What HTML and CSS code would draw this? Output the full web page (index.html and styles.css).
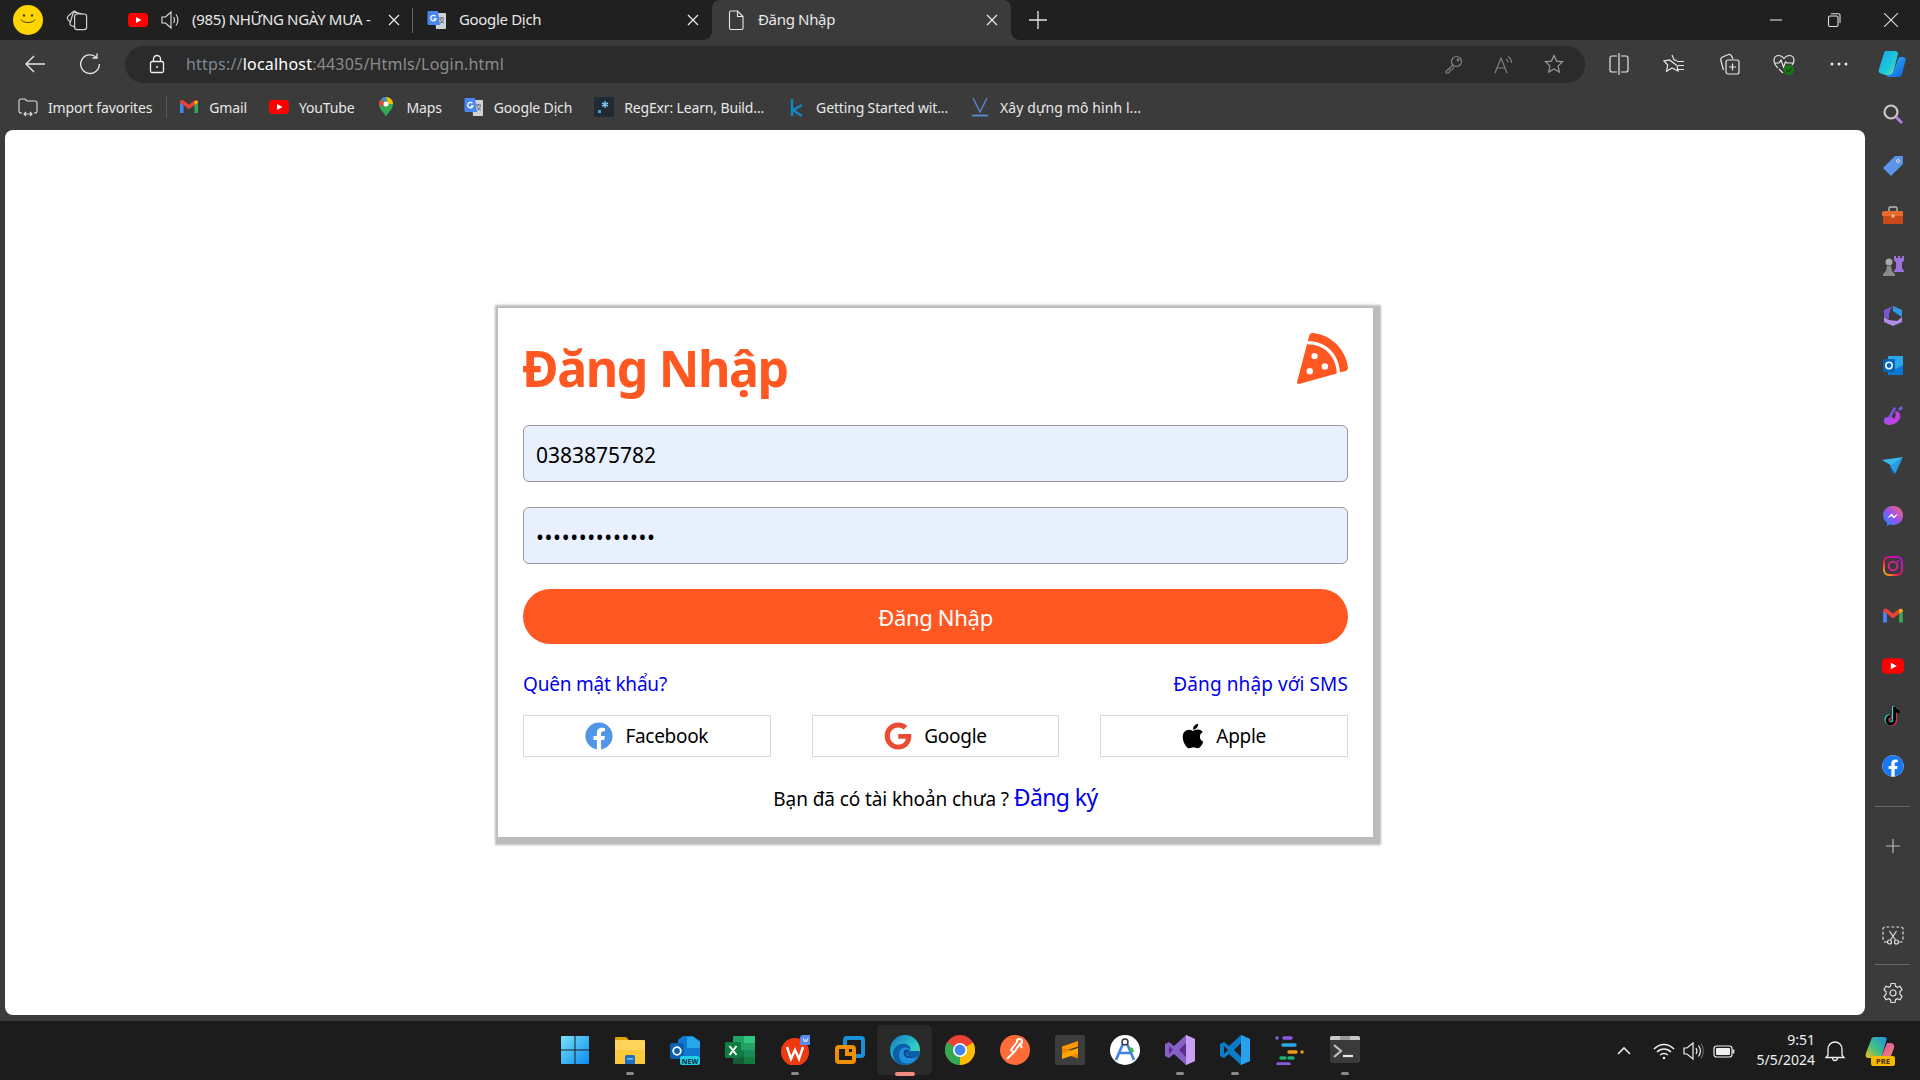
FILE: index.html
```html
<!DOCTYPE html>
<html lang="vi">
<head>
<meta charset="utf-8">
<title>Đăng Nhập</title>
<link rel="stylesheet" href="styles.css">
</head>
<body>
<svg class="defs" width="0" height="0" aria-hidden="true">
  <symbol id="yt" viewBox="0 0 20 20"><rect x="0" y="3" width="20" height="14" rx="4" fill="#f00"/><path d="M8 7l5.5 3L8 13z" fill="#fff"/></symbol>
  <symbol id="tr" viewBox="0 0 20 20"><path d="M8 3h10a1 1 0 0 1 1 1v14a1 1 0 0 1-1 1H9z" fill="#cfd3d8"/><path d="M12 8h5M14.5 7v1.5M13 9c.6 2 2 3.4 4 4M16.5 9c-.5 2-1.800 3.500-3.800 4.500" stroke="#5f6368" stroke-width="1" fill="none"/><path d="M1.500 1h9.500l2 14H1.500A1 1 0 0 1 .5 14V2a1 1 0 0 1 1-1z" fill="#4a86f0"/><path d="M8.500 6.300A2.700 2.700 0 1 0 9 9H6.700" fill="none" stroke="#fff" stroke-width="1.300"/></symbol>
  <symbol id="gm" viewBox="0 0 20 20"><path d="M1 5v11h3.500V8z" fill="#4285f4"/><path d="M19 5v11h-3.500V8z" fill="#34a853"/><path d="M1 5.500C1 3 3.500 2.500 5 3.800L10 7.800l5-4c1.500-1.300 4-.8 4 1.700L15.500 8 10 12.200 4.500 8z" fill="#ea4335"/><path d="M15.500 8V4.500c1.500-1.500 3.500-1 3.500 1z" fill="#fbbc04"/></symbol>
  <symbol id="fb" viewBox="0 0 512 512"><circle cx="256" cy="256" r="248" fill="#fff"/><path fill="#1877f2" d="M504 256C504 119 393 8 256 8S8 119 8 256c0 123.780 90.690 226.380 209.250 245V327.690h-63V256h63v-54.640c0-62.150 37-96.480 93.670-96.480 27.140 0 55.520 4.840 55.520 4.840v61h-31.280c-30.800 0-40.410 19.120-40.410 38.730V256h68.780l-11 71.690h-57.780V501C413.310 482.380 504 379.780 504 256z"/></symbol>
</svg>

<div class="titlebar">
  <div class="avatar-slot">
    <svg class="avatar" viewBox="0 0 30 30"><circle cx="15" cy="15" r="15" fill="#ffd500"/><circle cx="11" cy="10.500" r="1.200" fill="#4a3d00"/><circle cx="19" cy="10.500" r="1.200" fill="#4a3d00"/><path d="M8 14.500c2 4 12 4 14 0" fill="none" stroke="#4a3d00" stroke-width="1"/></svg>
  </div>
  <div class="tabs-btn">
    <svg class="ic24" viewBox="0 0 20 20" fill="none" stroke="#d0d0d0" stroke-width="1"><rect x="8" y="5" width="10" height="13" rx="2"/><path d="M7.500 15.500L5.500 14.800a2 2 0 0 1-1.200-2.500L6.500 5a2 2 0 0 1 2.500-1.300L14.500 5"/><path d="M4 11.500L2.400 9.500a2 2 0 0 1 .4-2.800L6.500 3.200a2 2 0 0 1 2.800.2L10.500 4.800"/></svg>
  </div>
  <div class="tab">
    <svg class="ic20"><use href="#yt"/></svg>
    <svg class="ic20 speaker" viewBox="0 0 20 20" fill="none" stroke="#e0e0e0" stroke-width="1.100"><path d="M2 7h3.500L11 2v16l-5.500-5H2z"/><path d="M13.500 7c1.300 1.500 1.300 4.500 0 6M16 4.500c2.500 3 2.500 8 0 11"/></svg>
    <span class="tab-title">(985) NHỮNG NGÀY MƯA -</span>
    <svg class="close" viewBox="0 0 12 12" stroke="#e8e8e8" stroke-width="1.300"><path d="M1 1l10 10M11 1L1 11"/></svg>
  </div>
  <div class="tab tab-sep">
    <svg class="ic20"><use href="#tr"/></svg>
    <span class="tab-title">Google Dịch</span>
    <svg class="close" viewBox="0 0 12 12" stroke="#e8e8e8" stroke-width="1.300"><path d="M1 1l10 10M11 1L1 11"/></svg>
  </div>
  <div class="tab tab-active">
    <svg class="ic20" viewBox="0 0 20 20" fill="none" stroke="#e8e8e8" stroke-width="1.100"><path d="M3.500 2.500A1.500 1.500 0 0 1 5 1h6.500L17 6.500V18a1.500 1.500 0 0 1-1.500 1.500H5A1.500 1.500 0 0 1 3.500 18zM11.500 1v5.500H17"/></svg>
    <span class="tab-title">Đăng Nhập</span>
    <svg class="close" viewBox="0 0 12 12" stroke="#e8e8e8" stroke-width="1.300"><path d="M1 1l10 10M11 1L1 11"/></svg>
  </div>
  <svg class="newtab" viewBox="0 0 18 18" stroke="#e8e8e8" stroke-width="1.300"><path d="M9 0v18M0 9h18"/></svg>
  <div class="winctl">
    <div class="winbtn"><svg class="ic14" viewBox="0 0 14 14" stroke="#e0e0e0" stroke-width="1.100"><path d="M1 7h12"/></svg></div>
    <div class="winbtn"><svg class="ic14" viewBox="0 0 14 14" stroke="#e0e0e0" stroke-width="1.100" fill="none"><rect x="1.500" y="3" width="9.500" height="10.500" rx="1.500"/><path d="M4 .8h7.500A1.500 1.500 0 0 1 13 2.300V10"/></svg></div>
    <div class="winbtn"><svg class="ic14" viewBox="0 0 14 14" stroke="#e0e0e0" stroke-width="1.100"><path d="M0 0l14 14M14 0L0 14"/></svg></div>
  </div>
</div>

<div class="toolbar">
  <div class="navbtn"><svg class="ic22" viewBox="0 0 22 22" fill="none" stroke="#e8e8e8" stroke-width="1.400"><path d="M21 11H2M10 3l-8 8 8 8"/></svg></div>
  <div class="navbtn nav2"><svg class="ic22" viewBox="0 0 22 22" fill="none" stroke="#e8e8e8" stroke-width="1.300"><path d="M17.500 4.500A9.300 9.300 0 1 0 20.300 11"/><path d="M18 .5v4.500h-4.500"/></svg></div>
  <div class="addr">
    <svg class="ic20" viewBox="0 0 20 20" fill="none" stroke="#eee" stroke-width="1.300"><rect x="3.500" y="7.500" width="13" height="11" rx="1.500"/><path d="M6.500 7.500V5a3.500 3.500 0 0 1 7 0v2.500"/><circle cx="10" cy="13" r="1" fill="#eee" stroke="none"/></svg>
    <div class="url"><span class="u-dim">https://</span><span class="u-host">localhost</span><span class="u-gray">:44305/Htmls/Login.html</span></div>
    <div class="addr-tools">
      <svg class="ic20" viewBox="0 0 20 20" fill="none" stroke="#808080" stroke-width="1.200"><circle cx="12.500" cy="7.500" r="5"/><circle cx="14" cy="6" r=".8"/><path d="M9 11l-7 6.500V19h2.500l1-1 .5-2h2l2-3"/></svg>
      <svg class="ic20" viewBox="0 0 20 20" fill="none" stroke="#808080" stroke-width="1.200"><path d="M1 19L7 4l6 15M3 14h8"/><path d="M12 5c1.500 1 2 2.500 2 3.500M14 2.500c2.500 1.500 3.500 4 3.500 6.500"/></svg>
      <svg class="ic20" viewBox="0 0 20 20" fill="none" stroke="#9a9a9a" stroke-width="1.200"><path d="M10 1.500l2.600 5.600 6 .7-4.500 4.100 1.200 6.100L10 15l-5.300 3 1.200-6.100L1.400 7.800l6-.7z"/></svg>
    </div>
  </div>
  <div class="tools">
    <svg class="ic22" viewBox="0 0 22 22" fill="none" stroke="#e8e8e8" stroke-width="1.200"><path d="M9 3H4a2 2 0 0 0-2 2v12a2 2 0 0 0 2 2h5M13 3h5a2 2 0 0 1 2 2v12a2 2 0 0 1-2 2h-5M11 0v22"/></svg>
    <svg class="ic22" viewBox="0 0 22 22" fill="none" stroke="#e8e8e8" stroke-width="1.200"><path d="M9 2l2.200 5 2.800.3M14 12.500l1 5.500-6-3-5.500 3.200L4.700 12 1 8l5.500-1z"/><path d="M14 8.500h7M15 12.500h6M14 16.500h7"/></svg>
    <svg class="ic22" viewBox="0 0 22 22" fill="none" stroke="#e8e8e8" stroke-width="1.200"><rect x="8" y="7" width="13" height="14" rx="2"/><path d="M14.500 10.500v7M11 14h7"/><path d="M5.500 17L3 8a3 3 0 0 1 1.500-4L10 1.700a3 3 0 0 1 3.500 1.200L15 6"/></svg>
    <svg class="ic22" viewBox="0 0 22 22" fill="none" stroke="#e8e8e8" stroke-width="1.200"><path d="M5 15C2 12 1 10 1 7.500 1 4.500 3 2.500 6 2.500c2 0 3.500 1 5 3 1.500-2 3-3 5-3 3 0 5 2 5 5 0 1.500-.5 3-2 4.500M1 10h5l2-3 2.500 7 2-5 1.500 1h6M6 16l4 4"/><circle cx="16" cy="17" r="5" fill="#107c10" stroke="none"/><path d="M13.500 17l2 2 3-3.500" stroke="#2a2a2a" stroke-width="1.100"/></svg>
    <svg class="ic22" viewBox="0 0 22 22" fill="#e8e8e8"><circle cx="4" cy="11" r="1.500"/><circle cx="11" cy="11" r="1.500"/><circle cx="18" cy="11" r="1.500"/></svg>
    <svg class="ic30" viewBox="0 0 30 30"><defs><linearGradient id="cpa" x1="0" y1="0" x2="1" y2="1"><stop offset="0" stop-color="#16a6e8"/><stop offset=".6" stop-color="#1ec8d8"/><stop offset="1" stop-color="#a2e2a2"/></linearGradient><linearGradient id="cpb" x1="0" y1="0" x2="1" y2="1"><stop offset="0" stop-color="#2bb5f5"/><stop offset="1" stop-color="#0f62e0"/></linearGradient></defs><path d="M9 2h9c2 0 3 1 3 3l-5 19c-.5 2-2 3-4 3l-7-2c-3-1-4-2-3-5L7 4c.3-1.300 1-2 2-2z" fill="url(#cpa)"/><path d="M22 8h4c2 0 3 1.500 2.500 3.500L25 25c-.5 2-2 3-4 3H11c-1 0-1-1-.5-2 2.500.2 5-1 5.500-3z" fill="url(#cpb)"/></svg>
  </div>
</div>

<div class="body-row">
  <div class="left-col">
    <div class="bookmarks">
      <div class="bm">
        <svg class="ic20" viewBox="0 0 20 20" fill="none" stroke="#e0e0e0" stroke-width="1.100"><path d="M4 16H3a2 2 0 0 1-2-2V4a2 2 0 0 1 2-2h4l2 2h8a2 2 0 0 1 2 2v8a2 2 0 0 1-2 2h-1M6 17h8M8 15l-2 2 2 2M12 15l2 2-2 2"/></svg>
        <span>Import favorites</span>
      </div>
      <div class="bm-sep"></div>
      <div class="bm"><svg class="ic20"><use href="#gm"/></svg><span>Gmail</span></div>
      <div class="bm"><svg class="ic20"><use href="#yt"/></svg><span>YouTube</span></div>
      <div class="bm">
        <svg class="ic20" viewBox="0 0 20 20"><path d="M10 20c-1-4-7-7-7-13a7 7 0 0 1 14 0c0 6-6 9-7 13z" fill="#34a853"/><path d="M5 2.500A7 7 0 0 1 10 0v4.500z" fill="#4285f4"/><path d="M3 7a7 7 0 0 1 2-4.500l3 3L6 10z" fill="#ea4335"/><path d="M10 0a7 7 0 0 1 7 7h-4.500z" fill="#fbbc04"/><circle cx="10" cy="7" r="2.500" fill="#fff"/></svg>
        <span>Maps</span>
      </div>
      <div class="bm"><svg class="ic20"><use href="#tr"/></svg><span>Google Dịch</span></div>
      <div class="bm">
        <svg class="ic20" viewBox="0 0 20 20"><rect width="20" height="20" fill="#1f2a33"/><path d="M11 4v7M8 6l6 3M14 6L8 9" stroke="#7fc4f5" stroke-width="1.400"/><rect x="4" y="13" width="3" height="3" fill="#4a9ad8"/></svg>
        <span>RegExr: Learn, Build...</span>
      </div>
      <div class="bm">
        <svg class="ic20" viewBox="0 0 20 20" fill="none" stroke="#1088c8" stroke-width="2.400"><path d="M6 2v17M16 8l-9 5 9 6"/></svg>
        <span>Getting Started wit...</span>
      </div>
      <div class="bm bm-wide">
        <svg class="ic20" viewBox="0 0 20 20" fill="none" stroke="#5a8ad0" stroke-width="1.400"><path d="M3 1l7 14 7-14"/><path d="M2 18.500h16" stroke-width="1.800"/></svg>
        <span>Xây dựng mô hình l...</span>
      </div>
    </div>

    <main class="page">
      <form class="card">
        <div class="card-head">
          <h1 class="title">Đăng Nhập</h1>
          <svg class="pizza" viewBox="0 0 512 512"><path fill="#ff5722" d="M158.870.15c-16.160-1.520-31.200 8.420-35.330 24.120l-14.810 56.270c187.620 5.490 314.540 130.610 322.480 317l56.940-15.780c15.720-4.360 25.490-19.680 23.620-35.900C490.890 165.080 340.780 17.320 158.870.15zm-58.470 112L.55 491.640a16.210 16.210 0 0 0 20 19.750l379-105.100c-4.270-174.890-123.080-292.140-299.150-294.100zM128 416a32 32 0 1 1 32-32 32 32 0 0 1-32 32zm48-152a32 32 0 1 1 32-32 32 32 0 0 1-32 32zm104 104a32 32 0 1 1 32-32 32 32 0 0 1-32 32z"/></svg>
        </div>
        <input class="field" type="text" value="0383875782">
        <input class="field field-pw" type="password" value="12345678901234">
        <button class="submit" type="button">Đăng Nhập</button>
        <div class="link-row">
          <a class="link" href="#">Quên mật khẩu?</a>
          <a class="link link-sms" href="#">Đăng nhập với SMS</a>
        </div>
        <div class="social">
          <div class="soc"><svg class="soc-ic" viewBox="0 0 512 512"><circle cx="256" cy="256" r="240" fill="#fff"/><path fill="#4f95e8" d="M504 256C504 119 393 8 256 8S8 119 8 256c0 123.780 90.690 226.380 209.250 245V327.690h-63V256h63v-54.640c0-62.150 37-96.480 93.670-96.480 27.140 0 55.520 4.840 55.520 4.840v61h-31.280c-30.800 0-40.410 19.120-40.410 38.730V256h68.780l-11 71.690h-57.780V501C413.310 482.380 504 379.780 504 256z"/></svg><span>Facebook</span></div>
          <div class="soc"><svg class="soc-ic" viewBox="0 0 488 512"><path fill="#ea4b35" d="M488 261.800C488 403.300 391.100 504 248 504 110.800 504 0 393.200 0 256S110.800 8 248 8c66.800 0 123 24.500 166.300 64.900l-67.500 64.900C258.500 52.600 94.300 116.600 94.300 256c0 86.500 69.100 156.600 153.700 156.600 98.200 0 135-70.400 140.800-106.900H248v-85.300h236.100c2.300 12.700 3.900 24.900 3.900 41.400z"/></svg><span>Google</span></div>
          <div class="soc"><svg class="soc-ic soc-ic-apple" viewBox="0 0 384 512"><path fill="#000" d="M318.700 268.700c-.2-36.700 16.400-64.400 50-84.800-18.800-26.900-47.200-41.700-84.700-44.600-35.500-2.800-74.300 20.700-88.500 20.700-15 0-49.400-19.700-76.400-19.700C63.300 141.200 4 184.800 4 273.500q0 39.300 14.400 81.200c12.800 36.700 59 126.700 107.200 125.200 25.200-.6 43-17.900 75.800-17.900 31.800 0 48.300 17.900 76.400 17.900 48.600-.7 90.400-82.500 102.600-119.300-65.200-30.700-61.700-90-61.700-91.900zm-56.600-164.200c27.300-32.400 24.800-61.900 24-72.500-24.100 1.400-52 16.400-67.900 34.900-17.500 19.800-27.800 44.300-25.600 71.900 26.100 2 49.900-11.400 69.500-34.300z"/></svg><span>Apple</span></div>
        </div>
        <p class="signup">Bạn đã có tài khoản chưa ? <a class="link link-big" href="#">Đăng ký</a></p>
      </form>
    </main>
  </div>

  <aside class="sidebar">
    <div class="side-search">
      <svg class="ic22" viewBox="0 0 22 22" fill="none"><circle cx="9" cy="9" r="6.500" stroke="#c8c8c8" stroke-width="2.200"/><path d="M14 14l6 6" stroke="#b080e0" stroke-width="3"/></svg>
    </div>
    <div class="side-item"><svg class="ic22" viewBox="0 0 22 22"><path d="M13 1h7a1 1 0 0 1 1 1v7L9 21 1 13z" fill="#5b94e8"/><circle cx="16" cy="6" r="1.800" fill="#fff"/><circle cx="16" cy="6" r=".8" fill="#333"/></svg></div>
    <div class="side-item"><svg class="ic22" viewBox="0 0 22 22"><path d="M7 6V3.500A1.500 1.500 0 0 1 8.500 2h5A1.500 1.500 0 0 1 15 3.500V6" fill="none" stroke="#bbb" stroke-width="1.400"/><path d="M2 6h18a1 1 0 0 1 1 1v4H0V7z" fill="#ea6a2a"/><path d="M1 11h20v7a1 1 0 0 1-1 1H2a1 1 0 0 1-1-1z" fill="#c84a18"/><rect x="9.500" y="9.500" width="3" height="3" fill="#e8c0a0"/></svg></div>
    <div class="side-item"><svg class="ic22" viewBox="0 0 22 22"><path d="M12 1h2v2h2V1h2v2h2V1h2v5l-2 1v6l2 3v1H12v-1l2-3V7l-2-1z" fill="#9a72d8"/><circle cx="7" cy="7" r="3.500" fill="#a8a8a8"/><path d="M5 11h4l1 5 3 3v2H1v-2l3-3z" fill="#8a8a8a"/></svg></div>
    <div class="side-item"><svg class="ic22" viewBox="0 0 22 22"><path d="M11 1l9 4v7l-5-3-4-2z" fill="#2f9be8"/><path d="M2 5l9-4-3 4-1 9-5-2z" fill="#7d55d0"/><path d="M2 12l5 3 8 1 5-4v5l-9 4-9-4z" fill="#b08ce8"/><path d="M7 8l4-2 4 3v4l-4 2-4-2z" fill="#3b3b3b"/></svg></div>
    <div class="side-item"><svg class="ic22" viewBox="0 0 22 22"><rect x="6" y="1" width="15" height="19" rx="1" fill="#28a8ea"/><path d="M6 10l7.500 4L21 10v10H6z" fill="#0a78d4"/><rect x="1" y="4" width="12" height="13" rx="1" fill="#0364b8"/><circle cx="7" cy="10.500" r="3.200" fill="none" stroke="#fff" stroke-width="1.500"/></svg></div>
    <div class="side-item"><svg class="ic22" viewBox="0 0 22 22"><path d="M13 6c5 0 6 4 5 7-1.500 4-6 7-10 7-4 0-7-2-6-5 3-1 6-2 7-4l3 3c2-2 2-5 1-8z" fill="#c040e0"/><path d="M5 14L12 2l2 1-7 13z" fill="#7a5ae0"/><circle cx="5" cy="15" r="3" fill="#a050f0"/><path d="M16 4l3-3 2 2-3 3z" fill="#7a5ae0"/></svg></div>
    <div class="side-item"><svg class="ic22" viewBox="0 0 22 22"><path d="M0 5l21-3-11 9z" fill="#3ab8f0"/><path d="M21 2L13 19 8 11z" fill="#2a9be0"/><path d="M8 11l5 8-4-2z" fill="#0a5fa8"/></svg></div>
    <div class="side-item"><svg class="ic22" viewBox="0 0 22 22"><defs><linearGradient id="msg" x1="0" y1="1" x2="1" y2="0"><stop offset="0" stop-color="#0a90ff"/><stop offset=".5" stop-color="#9a50f0"/><stop offset="1" stop-color="#ff6a68"/></linearGradient></defs><path d="M11 1c5.700 0 10 4 10 9.500S16.700 20 11 20c-1 0-2-.1-3-.4L5 21v-3.400C2.500 15.800 1 13.400 1 10.500 1 5 5.300 1 11 1z" fill="url(#msg)"/><path d="M5 13.500l4.500-5 2.500 2.500 4.500-2.500-4.500 5-2.500-2.500z" fill="#fff"/></svg></div>
    <div class="side-item"><svg class="ic22" viewBox="0 0 22 22" fill="none"><defs><linearGradient id="ig" x1="0" y1="1" x2="1" y2="0"><stop offset="0" stop-color="#ffc400"/><stop offset=".4" stop-color="#f0105a"/><stop offset="1" stop-color="#b010f0"/></linearGradient></defs><rect x="2" y="2" width="18" height="18" rx="5" stroke="url(#ig)" stroke-width="2"/><circle cx="11" cy="11" r="4.300" stroke="#e0209a" stroke-width="1.700"/><circle cx="16" cy="6" r="1" fill="#c020d0"/></svg></div>
    <div class="side-item"><svg class="ic22"><use href="#gm"/></svg></div>
    <div class="side-item"><svg class="ic22"><use href="#yt"/></svg></div>
    <div class="side-item"><svg class="ic22" viewBox="0 0 22 22" fill="none"><path d="M12.500 2v13a3.800 3.800 0 1 1-3.800-3.800" stroke="#25f4ee" stroke-width="2.800" transform="translate(-1 -.5)"/><path d="M12.500 2v13a3.800 3.800 0 1 1-3.800-3.800" stroke="#fe2c55" stroke-width="2.800" transform="translate(1 .5)"/><path d="M12.500 2v13a3.800 3.800 0 1 1-3.800-3.800M12.500 2c.3 3 2 4.500 5 5" stroke="#000" stroke-width="2.800"/></svg></div>
    <div class="side-item"><svg class="ic22"><use href="#fb"/></svg></div>
    <div class="side-div"></div>
    <div class="side-plus"><svg class="ic14" viewBox="0 0 14 14" stroke="#b8b8b8" stroke-width="1.200"><path d="M7 0v14M0 7h14"/></svg></div>
    <div class="side-bottom">
      <div class="side-plus"><svg class="ic22" viewBox="0 0 22 22" fill="none" stroke="#e0e0e0" stroke-width="1.200"><path d="M5 17H3a2 2 0 0 1-2-2V4a2 2 0 0 1 2-2h16a2 2 0 0 1 2 2v11a2 2 0 0 1-2 2h-2" stroke-dasharray="3 2"/><path d="M7.500 6l6 9M14.500 6l-6 9"/><circle cx="7.500" cy="17" r="2"/><circle cx="14.500" cy="17" r="2"/></svg></div>
      <div class="side-div side-div2"></div>
      <div class="side-plus"><svg class="ic22" viewBox="0 0 22 22" fill="none" stroke="#e0e0e0" stroke-width="1.200"><circle cx="11" cy="11" r="3"/><path d="M9 1.500h4l.6 2.900 1.700.9 2.700-1 2 3.400-2.100 2v2.600l2.100 2-2 3.400-2.700-1-1.700.9-.6 2.900H9l-.6-2.900-1.700-.9-2.700 1-2-3.400 2.100-2V9.700l-2.100-2 2-3.400 2.700 1 1.700-.9z"/></svg></div>
    </div>
  </aside>
</div>

<footer class="taskbar">
  <div class="task-apps">
    <div class="app"><svg class="ic30" viewBox="0 0 30 30"><defs><linearGradient id="win" x1="0" y1="0" x2="1" y2="1"><stop offset="0" stop-color="#7ae0f8"/><stop offset="1" stop-color="#0a8cf0"/></linearGradient></defs><path d="M1 2a1 1 0 0 1 1-1h12.500v13.500H1zM15.500 1H28a1 1 0 0 1 1 1v12.500H15.500zM1 15.500h13.500V29H2a1 1 0 0 1-1-1zM15.500 15.500H29V28a1 1 0 0 1-1 1H15.500z" fill="url(#win)"/></svg></div>
    <div class="app run"><svg class="ic30" viewBox="0 0 30 30"><path d="M0 3a1 1 0 0 1 1-1h10l3 3h-14z" fill="#e0a000"/><path d="M0 5h29a1 1 0 0 1 1 1v22a1 1 0 0 1-1 1H1a1 1 0 0 1-1-1z" fill="#ffd35c"/><path d="M0 15h30v13a1 1 0 0 1-1 1H1a1 1 0 0 1-1-1z" fill="#fcc83c"/><path d="M10 22a2 2 0 0 1 2-2h6a2 2 0 0 1 2 2v7H10z" fill="#1d6fc4"/><rect x="12" y="23" width="6" height="1.600" fill="#7ac0f8"/></svg></div>
    <div class="app"><svg class="ic30" viewBox="0 0 30 30"><path d="M13 1h10l7 5v15H8V5z" fill="#1078d0"/><path d="M17 2h6l7 5v6H17z" fill="#28a8ea"/><rect x="0" y="8" width="14" height="16" rx="2" fill="#0a5fb0"/><circle cx="7" cy="16" r="3.800" fill="none" stroke="#fff" stroke-width="1.800"/><rect x="10" y="21" width="20" height="9" rx="2" fill="#20d0e8"/><text class="badge-new" x="20" y="28.500">NEW</text></svg></div>
    <div class="app"><svg class="ic30" viewBox="0 0 30 30"><rect x="8" y="1" width="22" height="28" rx="1" fill="#21a366"/><rect x="19" y="1" width="11" height="7" fill="#33c481"/><rect x="8" y="15" width="11" height="7" fill="#107c41"/><rect x="19" y="15" width="11" height="7" fill="#1a8a58"/><rect x="19" y="22" width="11" height="7" fill="#107c41"/><rect x="8" y="22" width="11" height="7" fill="#185c37"/><rect x="0" y="7" width="16" height="16" rx="1" fill="#107c41"/><path d="M4.500 11l7 9M11.500 11l-7 9" stroke="#fff" stroke-width="2"/></svg></div>
    <div class="app run"><svg class="ic30" viewBox="0 0 30 30"><circle cx="15" cy="17" r="14" fill="#ee3a10"/><path d="M7 12l4 12 4-9 4 9 4-12" fill="none" stroke="#fff" stroke-width="2.400"/><path d="M22 0h8v9a1 1 0 0 1-1 1h-9V2z" fill="#5a8cf0"/><path d="M23 3l1.500 4 1-2.500 1 2.500 1.500-4" fill="none" stroke="#fff" stroke-width=".8"/></svg></div>
    <div class="app"><svg class="ic30" viewBox="0 0 30 30" fill="none" stroke-width="4"><path d="M11 12V5a2 2 0 0 1 2-2h14a2 2 0 0 1 2 2v14a2 2 0 0 1-2 2h-8" stroke="#1a90d8" transform="translate(-1)"/><path d="M19 19v6a2 2 0 0 1-2 2H4a2 2 0 0 1-2-2V14a2 2 0 0 1 2-2h13a2 2 0 0 1 2 2v5h-7v-7" stroke="#f09000"/></svg></div>
    <div class="app active"><svg class="ic30" viewBox="0 0 30 30"><defs><linearGradient id="edg" x1="0" y1="0" x2="1" y2="1"><stop offset="0" stop-color="#1078c8"/><stop offset=".6" stop-color="#30c8c8"/><stop offset="1" stop-color="#70e060"/></linearGradient></defs><circle cx="15" cy="15" r="15" fill="url(#edg)"/><path d="M3 17C5 9 13 7 18 10c3 2 3 5 1 6h11c-1 9-8 14-15 14C7 30 2 24 3 17z" fill="#0a5fa8"/><path d="M9 20c0-6 5-9 9-7 2 1 2 3 0 4-2 0-1 5 5 6 2 0 3-.5 5-2-3 6-9 9-14 7-3-1-5-4-5-8z" fill="#1f8fdc"/><path d="M14 16c1-2 4-2 5-.500-.5 1.500-3 2-3 3 0 2 3 4 8 3-3 2-7 2-9 0-1-1.500-2-3.500-1-5.500z" fill="#0a4a88"/></svg></div>
    <div class="app"><svg class="ic30" viewBox="0 0 30 30"><circle cx="15" cy="15" r="15" fill="#ea4335"/><path d="M15 15L2 22.500A15 15 0 0 0 15 30z" fill="#34a853"/><path d="M15 15l0 15A15 15 0 0 0 28 7.500z" fill="#fbbc04"/><path d="M2 7.500L15 15 2 22.500A15 15 0 0 1 2 7.500z" fill="#34a853"/><circle cx="15" cy="15" r="7" fill="#fff"/><circle cx="15" cy="15" r="5.400" fill="#4285f4"/></svg></div>
    <div class="app"><svg class="ic30" viewBox="0 0 30 30"><circle cx="15" cy="15" r="15" fill="#ff6c37"/><path d="M7 24l8-8M15 16l5-7a2.500 2.500 0 1 0-3-2L11 15l3 3M20 9l2 4" fill="none" stroke="#fff" stroke-width="2"/></svg></div>
    <div class="app"><svg class="ic30" viewBox="0 0 30 30"><rect width="30" height="30" rx="2" fill="#3d3d3d"/><path d="M7 11.500L23 6v5.500L7 17z" fill="#ff9800"/><path d="M7 12.500l16 5.500v5.500L7 18z" fill="#f08400"/><path d="M7 18.500L23 13v5.500L7 24z" fill="#ffa600"/></svg></div>
    <div class="app"><svg class="ic30" viewBox="0 0 30 30"><circle cx="15" cy="15" r="15" fill="#fff"/><path d="M15 4l-9 21M15 4l9 21M8 18h14" fill="none" stroke="#4080e8" stroke-width="2.600"/><circle cx="15" cy="7" r="3" fill="#fff" stroke="#334" stroke-width="1.400"/><path d="M19 12l4 1 1 4-3 1z" fill="#3ab85a"/></svg></div>
    <div class="app run"><svg class="ic30" viewBox="0 0 30 30"><path d="M21 0l9 4v22l-9 4-12-11-5 4-4-2V9l4-2 5 4z" fill="#8661c5"/><path d="M21 0l9 4v22l-9 4z" fill="#c8a2f0"/><path d="M4 11v8l4-4z" fill="#5c2d91"/><path d="M21 8l-7 7 7 7z" fill="#5c2d91"/></svg></div>
    <div class="app run"><svg class="ic30" viewBox="0 0 30 30"><path d="M21 0l9 4v22l-9 4-12-11-5 4-4-2V9l4-2 5 4z" fill="#0a7cc8"/><path d="M21 0l9 4v22l-9 4z" fill="#2ba0ee"/><path d="M4 11v8l4-4z" fill="#1f1f1f"/><path d="M21 8l-7 7 7 7z" fill="#1f1f1f"/></svg></div>
    <div class="app"><svg class="ic30" viewBox="0 0 30 30" stroke-width="3.400" stroke-linecap="round" fill="none"><path d="M2 3h.1M9 3h7" stroke="#8a5ce0"/><path d="M8 10h12" stroke="#28a8e8"/><path d="M14 17h7" stroke="#f09a20"/><path d="M27 17h.1" stroke="#f09a20"/><path d="M6 23h4M14 23h4" stroke="#20b070"/><path d="M3 29h11" stroke="#8a5ce0"/></svg></div>
    <div class="app run"><svg class="ic30" viewBox="0 0 30 30"><rect y="1" width="30" height="27" rx="2" fill="#3a3a3a"/><path d="M0 3a2 2 0 0 1 2-2h26a2 2 0 0 1 2 2v2H0z" fill="#c8c8c8"/><rect x="10" y="1" width="10" height="4" fill="#9a9a9a"/><path d="M4 10l7 6-7 6" fill="none" stroke="#c0c0c0" stroke-width="2.200"/><path d="M13 21h10" stroke="#e8e8e8" stroke-width="2.200"/></svg></div>
  </div>
  <div class="tray">
    <svg class="ic16 t-chev" viewBox="0 0 16 16" fill="none" stroke="#e8e8e8" stroke-width="1.600"><path d="M2 11l6-6 6 6"/></svg>
    <svg class="ic22 t-wifi" viewBox="0 0 22 22" fill="none" stroke="#f0f0f0" stroke-width="1.500"><path d="M1 9c6-6 14-6 20 0M4 12c4-4 10-4 14 0M7 15c2.500-2 5.500-2 8 0"/><circle cx="11" cy="18" r="1.300" fill="#f0f0f0" stroke="none"/></svg>
    <svg class="ic22 t-vol" viewBox="0 0 22 22" fill="none" stroke="#f0f0f0" stroke-width="1.200"><path d="M2 8h3l6-5v16l-6-5H2z"/><path d="M14 8c1.300 2 1.300 4 0 6M16.500 5.500c2.500 3.500 2.500 7.500 0 11"/><path d="M19 3.500c3 4 3 11 0 15" stroke="#666"/></svg>
    <svg class="ic22 t-bat" viewBox="0 0 22 22" fill="none"><rect x="1" y="6" width="18" height="11" rx="2.500" stroke="#f0f0f0" stroke-width="1.200"/><rect x="3" y="8" width="14" height="7" rx="1" fill="#f0f0f0"/><path d="M20.500 9.500v4" stroke="#f0f0f0" stroke-width="1.600"/></svg>
    <div class="clock"><div>9:51</div><div>5/5/2024</div></div>
    <svg class="ic22 t-bell" viewBox="0 0 22 22" fill="none" stroke="#f0f0f0" stroke-width="1.300"><path d="M4 15V9a7 7 0 0 1 14 0v6l2 2.500H2zM8.500 18a2.500 2.500 0 0 0 5 0"/></svg>
    <svg class="ic30 t-copilot" viewBox="0 0 30 30"><defs><linearGradient id="cp3" x1="0" y1="1" x2="1" y2="0"><stop offset="0" stop-color="#f8c020"/><stop offset=".45" stop-color="#40c080"/><stop offset="1" stop-color="#2090e8"/></linearGradient><linearGradient id="cp4" x1="0" y1="0" x2="1" y2="1"><stop offset="0" stop-color="#e040c0"/><stop offset="1" stop-color="#f09060"/></linearGradient></defs><path d="M9 1h10c2 0 3 1 2.500 3L17 19c-.5 2-2 3-4 3H4c-3 0-4-2-3-5L6 4c.4-2 1.500-3 3-3z" fill="url(#cp3)"/><path d="M22 7h3c3 0 5 2 4 5l-3 8c-.5 2-2 3-4 3H14l3-4z" fill="url(#cp4)"/><rect x="6" y="20" width="24" height="10" rx="2" fill="#f8b800"/><text class="badge-pre" x="18" y="28">PRE</text></svg>
  </div>
</footer>
</body>
</html>
```

FILE: styles.css
```css
* { box-sizing: border-box; }
html, body { margin: 0; padding: 0; height: 100%; }
body {
  width: 1920px; height: 1080px; overflow: hidden;
  display: flex; flex-direction: column;
  background: #3b3b3b;
  font-family: "Noto Sans", "Open Sans", sans-serif;
  color: #000;
}
.defs { position: absolute; }
svg { display: block; flex: none; }
.ic14 { width: 14px; height: 14px; }
.ic16 { width: 16px; height: 16px; }
.ic20 { width: 20px; height: 20px; }
.ic22 { width: 22px; height: 22px; }
.ic24 { width: 24px; height: 24px; }
.ic30 { width: 30px; height: 30px; }

/* title bar */
.titlebar { height: 40px; flex: none; background: #202020; display: flex; align-items: center; color: #e8e8e8; }
.avatar-slot { width: 56px; display: flex; justify-content: center; }
.avatar { width: 30px; height: 30px; }
.tabs-btn { width: 42px; margin-right: 16px; display: flex; justify-content: center; }
.tab {
  width: 299px; height: 40px; flex: none; padding: 0 11px 0 14px;
  display: flex; align-items: center; position: relative;
  font-size: 15px; letter-spacing: -0.33px; color: #e8e8e8;
}
.speaker { margin-left: 12px; }
.tab-title { flex: 1; margin-left: 12px; margin-top: -2px; white-space: nowrap; }
.close { width: 12px; height: 12px; margin: 0 2px; }
.tab-sep::before { content: ""; position: absolute; left: -1px; top: 8px; bottom: 7px; width: 1px; background: #666; }
.tab-active { background: #3b3b3b; border-radius: 8px 8px 0 0; }
.tab-active::before, .tab-active::after {
  content: ""; position: absolute; bottom: 0; width: 8px; height: 8px;
  background: radial-gradient(circle at var(--cx) 0, #202020 7.500px, #3b3b3b 8px);
}
.tab-active::before { left: -8px; --cx: 0; }
.tab-active::after { right: -8px; --cx: 8px; }
.newtab { width: 18px; height: 18px; margin-left: 18px; }
.winctl { margin-left: auto; display: flex; }
.winbtn { width: 57.500px; height: 40px; display: flex; align-items: center; justify-content: center; }

/* toolbar */
.toolbar { height: 48px; flex: none; background: #3b3b3b; display: flex; align-items: center; padding-left: 13px; }
.navbtn { width: 44px; display: flex; justify-content: center; margin-top: -1px; }
.nav2 { margin-left: 11px; }
.addr {
  width: 1460px; height: 37px; margin-left: 13px; flex: none;
  background: #2b2b2b; border-radius: 19px; display: flex; align-items: center; padding: 0 21px 0 22px;
}
.url { margin-left: 19px; font-size: 16px; letter-spacing: 0.2px; white-space: nowrap; }
.u-dim { color: #7f8a94; }
.u-host { color: #fff; }
.u-gray { color: #8c8c8c; }
.addr-tools { margin-left: auto; display: flex; gap: 30px; }
.tools { display: flex; align-items: center; margin-left: 23px; gap: 33px; }
.tools .ic30 { margin-left: -6px; }

/* body */
.body-row { flex: 1; display: flex; min-height: 0; }
.left-col { flex: 1; display: flex; flex-direction: column; min-width: 0; }
.bookmarks { height: 42px; flex: none; display: flex; align-items: center; padding-left: 18px; gap: 22px; margin-top: -2px; color: #e8e8e8; font-size: 14px; letter-spacing: -0.15px; }
.bm { display: flex; align-items: center; gap: 10px; white-space: nowrap; }
.bm-wide { letter-spacing: 0.1px; }
.bm-sep { width: 1px; height: 22px; background: #5a5a5a; margin: 0 -10px 0 -8px; }
.page { flex: 1; margin: 2px 0 6px 5px; background: #fff; border-radius: 8px; display: flex; align-items: center; justify-content: center; }

.card { width: 875px; height: 529px; padding: 25px; background: #fff; box-shadow: 2.500px 2px 2px 5.500px #bbb; margin-left: 1px; }
.card-head { display: flex; justify-content: space-between; align-items: flex-start; margin-bottom: 21px; }
.title { margin: 0 0 0 -1px; font-size: 50px; line-height: 71px; font-weight: 700; color: #ff5722; letter-spacing: -1.400px; }
.pizza { width: 51px; height: 51px; }
.field {
  display: block; width: 100%; height: 57px; margin-bottom: 25px; padding: 2px 10px 0 12px;
  background: #e8f0fe; border: 1px solid #999; border-radius: 6px;
  font-family: "Noto Sans", sans-serif; font-size: 21px; color: #000; outline: none;
}
.field-pw { letter-spacing: 0.65px; }
.submit {
  display: block; width: 100%; height: 55px; border: 0; border-radius: 28px;
  background: #ff5722; color: #fff; font-family: "Noto Sans", sans-serif; font-size: 22px; letter-spacing: -0.3px;
}
.link-row { display: flex; justify-content: space-between; margin-top: 28px; height: 24px; line-height: 24px; font-size: 19px; letter-spacing: -0.2px; }
.link { color: #00e; text-decoration: none; }
.link-sms { letter-spacing: 0.1px; }
.social { display: grid; grid-template-columns: repeat(3, 1fr); gap: 41px; margin-top: 19px; }
.soc { height: 42px; border: 1px solid #d8d8d8; display: flex; align-items: center; justify-content: center; gap: 12px; font-size: 19px; letter-spacing: -0.3px; }
.soc-ic { width: 28px; height: 28px; }
.soc-ic-apple { width: 22px; }
.signup { margin: 27px 0 0; text-align: center; font-size: 19px; letter-spacing: -0.1px; line-height: 26px; }
.link-big { font-size: 23px; letter-spacing: -0.6px; }

/* sidebar */
.sidebar { width: 55px; flex: none; display: flex; flex-direction: column; align-items: center; padding-bottom: 8px; }
.side-search { height: 52px; margin-bottom: 1px; display: flex; align-items: center; justify-content: center; }
.side-item { height: 50px; display: flex; align-items: center; justify-content: center; }
.side-div { width: 35px; height: 1px; background: #666; margin-top: 15px; margin-bottom: 19px; }
.side-div2 { margin: 8px 0 8px; }
.side-plus { height: 40px; display: flex; align-items: center; justify-content: center; }
.side-bottom { margin-top: auto; display: flex; flex-direction: column; align-items: center; }

/* taskbar */
.taskbar { height: 59px; flex: none; background: #1c1c1c; display: flex; align-items: center; color: #f0f0f0; position: relative; }
.task-apps { display: flex; margin-left: 547px; margin-top: -1px; }
.app { width: 55px; height: 50px; display: flex; align-items: center; justify-content: center; position: relative; border-radius: 5px; }
.run::after, .active::after { content: ""; position: absolute; bottom: 0; left: 50%; width: 8px; height: 3px; margin-left: -4px; border-radius: 2px; background: #8a8a8a; }
.active { background: #2a2a2a; }
.active::after { width: 20px; height: 4px; margin-left: -10px; background: #f28b82; bottom: -1px; }
.badge-new, .badge-pre { font-family: "Noto Sans", sans-serif; font-weight: 700; text-anchor: middle; }
.badge-new { font-size: 7px; fill: #0a2a40; }
.badge-pre { font-size: 7.500px; fill: #3a2a00; }
.tray { margin-left: auto; display: flex; align-items: center; padding-right: 25px; }
.t-chev { margin-right: 21px; }
.t-wifi { margin-right: 7px; }
.t-vol { margin-right: 9px; }
.clock { margin-left: 8px; margin-top: -2px; width: 72px; text-align: right; font-size: 14px; line-height: 20px; }
.t-bell { margin-left: 9px; }
.t-copilot { margin-left: 19px; }
```
